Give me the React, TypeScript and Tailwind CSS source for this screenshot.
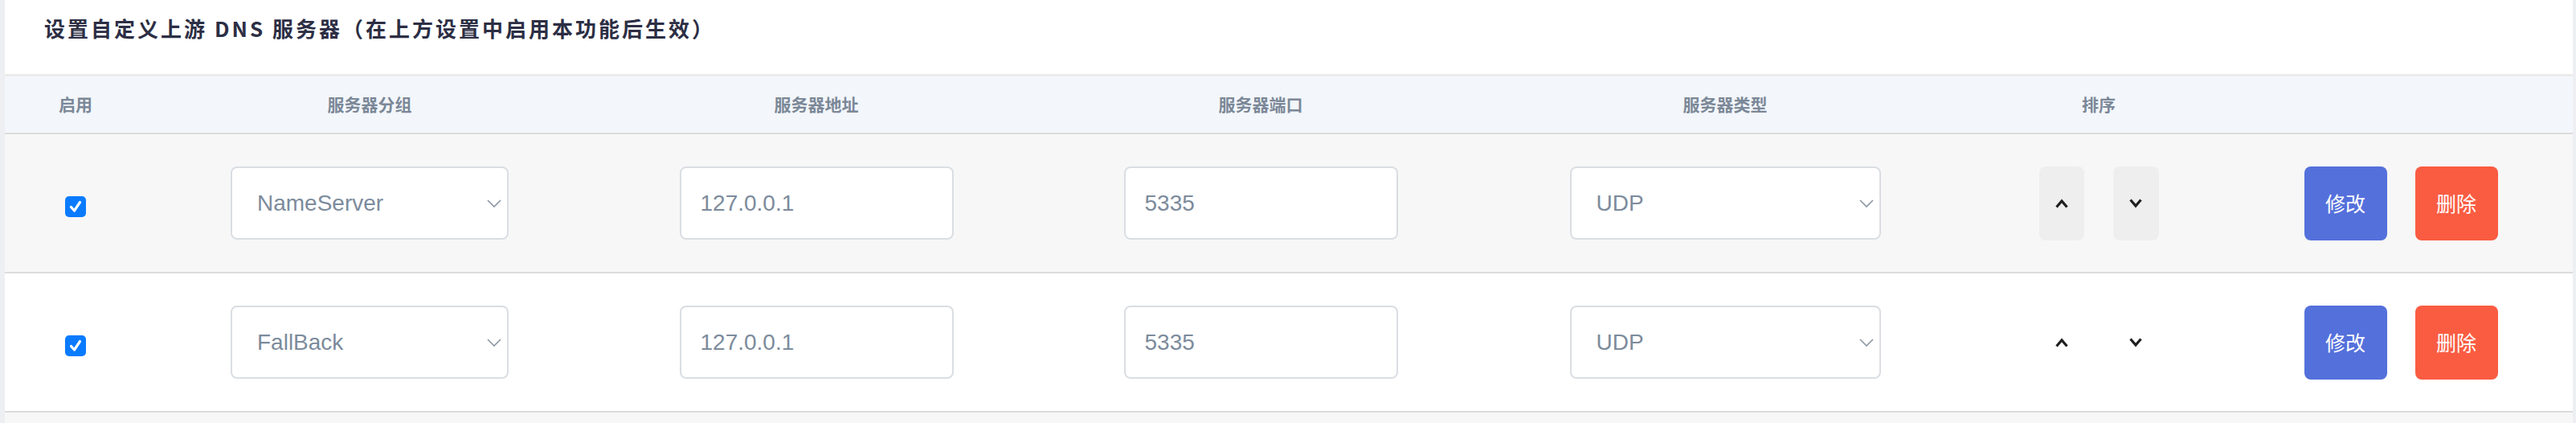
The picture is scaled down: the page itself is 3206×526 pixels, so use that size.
import React from 'react';

type Server = {
    group: string;
    addr: string;
    port: string;
    proto: string;
    enabled: boolean;
};

const servers: Server[] = [
    { group: 'NameServer', addr: '127.0.0.1', port: '5335', proto: 'UDP', enabled: true },
    { group: 'FallBack', addr: '127.0.0.1', port: '5335', proto: 'UDP', enabled: true },
];

const cols = 'grid grid-cols-[176px_556px_556px_550px_606px_324px_428px]';

const SelectArrow = () => (
    <svg width="18" height="10" viewBox="0 0 18 10" className="pointer-events-none absolute right-[9px] top-1/2 -translate-y-1/2">
        <path d="M1 1 L9 9 L17 1" fill="none" stroke="#8a96a3" strokeWidth="1.6" />
    </svg>
);

const SortArrow = ({ up }: { up: boolean }) => (
    <svg width="18" height="12" viewBox="0 0 18 12">
        <path d={up ? 'M2.5 10.5 L9 3 L15.5 10.5' : 'M2.5 1.5 L9 9 L15.5 1.5'} fill="none" stroke="#1f1f1f" strokeWidth="3.2" />
    </svg>
);

const CheckBox = ({ checked }: { checked: boolean }) => (
    <span className={`mt-[8px] flex h-[26px] w-[26px] items-center justify-center rounded-[5px] ${checked ? 'bg-[#0a7bff]' : 'border-2 border-[#c4c4c4] bg-white'}`}>
        {checked ? (
            <svg width="18" height="18" viewBox="0 0 18 18">
                <path d="M3.5 9.5 L7.5 14 L14.5 3.5" fill="none" stroke="#fff" strokeWidth="3.2" strokeLinecap="round" strokeLinejoin="round" />
            </svg>
        ) : null}
    </span>
);

const Field = ({ value, width }: { value: string; width: string }) => (
    <input
        readOnly
        value={value}
        className={`${width} h-[91px] rounded-[8px] border-2 border-[#dadee3] bg-white pl-[24px] text-[28px] text-[#7c8b9c] outline-none`}
    />
);

const Dropdown = ({ value, options, width }: { value: string; options: string[]; width: string }) => (
    <div className={`relative ${width}`}>
        <select
            value={value}
            onChange={() => {}}
            className="h-[91px] w-full appearance-none rounded-[8px] border-2 border-[#dadee3] bg-white pl-[31px] text-[28px] text-[#7c8b9c] outline-none"
        >
            {options.map((o) => (
                <option key={o}>{o}</option>
            ))}
        </select>
        <SelectArrow />
    </div>
);

export default function App() {
    return (
        <div className="flex h-[526px] w-full overflow-hidden bg-[#edeff3] pl-[6px] pr-[4px] font-['Liberation_Sans','Noto_Sans_CJK_SC',sans-serif]">
            <div className="flex-1 bg-white">
                <div className="h-[95px] border-b-[3px] border-[#ebebeb] pl-[49px] pt-[15px]">
                    <h1 className="font-['Noto_Sans_CJK_SC',sans-serif] text-[26px] font-bold leading-[40px] tracking-[3px] text-[#2c2e44]">
                        设置自定义上游 DNS 服务器（在上方设置中启用本功能后生效）
                    </h1>
                </div>

                <div className={`${cols} h-[72px] items-center border-b-2 border-[#dcdcdc] bg-[#f3f6fa] text-center font-['Noto_Sans_CJK_SC',sans-serif] text-[21px] font-semibold text-[#7b8898]`}>
                    <div>启用</div>
                    <div>服务器分组</div>
                    <div>服务器地址</div>
                    <div>服务器端口</div>
                    <div>服务器类型</div>
                    <div>排序</div>
                    <div></div>
                </div>

                {servers.map((s, i) => (
                    <div
                        key={i}
                        className={`${cols} h-[173px] items-center border-b-2 border-[#dcdcdc] ${i % 2 === 0 ? 'bg-[#f7f7f7]' : 'bg-white'}`}
                    >
                        <div className="flex justify-center">
                            <CheckBox checked={s.enabled} />
                        </div>
                        <div className="flex justify-center">
                            <Dropdown value={s.group} options={['NameServer', 'FallBack']} width="w-[346px]" />
                        </div>
                        <div className="flex justify-center">
                            <Field value={s.addr} width="w-[341px]" />
                        </div>
                        <div className="flex justify-center">
                            <Field value={s.port} width="w-[341px]" />
                        </div>
                        <div className="flex justify-center">
                            <Dropdown value={s.proto} options={['UDP', 'TCP', 'DoT', 'DoH']} width="w-[387px]" />
                        </div>
                        <div className="flex justify-center gap-[36px]">
                            <button className={`flex h-[92px] w-[56px] items-center justify-center rounded-[8px] ${i === 0 ? 'bg-[#eeeeee]' : 'bg-transparent'}`}>
                                <SortArrow up />
                            </button>
                            <button className={`flex h-[92px] w-[57px] items-center justify-center rounded-[8px] ${i === 0 ? 'bg-[#eeeeee]' : 'bg-transparent'}`}>
                                <SortArrow up={false} />
                            </button>
                        </div>
                        <div className="flex justify-center gap-[35px] font-['Noto_Sans_CJK_SC',sans-serif] text-[25px] text-white">
                            <button className="h-[92px] w-[103px] rounded-[8px] bg-[#5470db]">修改</button>
                            <button className="h-[92px] w-[103px] rounded-[8px] bg-[#fa5c42]">删除</button>
                        </div>
                    </div>
                ))}

                <div className="h-[40px] bg-[#f7f7f7]"></div>
            </div>
        </div>
    );
}
